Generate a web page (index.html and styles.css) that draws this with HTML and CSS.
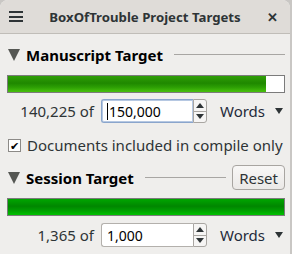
FILE: index.html
```html
<!DOCTYPE html>
<html lang="en">
<head>
    <meta charset="UTF-8">
    <title>BoxOfTrouble Project Targets</title>
    <link rel="stylesheet" href="styles.css">
</head>
<body>
    <div class="window">
        <div class="titlebar">
            <div class="menu-btn">
                <span></span><span></span><span></span>
            </div>
            <div class="title">BoxOfTrouble Project Targets</div>
            <div class="close-btn">&#x2715;</div>
        </div>
        <div class="content">
            <div class="section-head">
                <span class="caret"></span>
                <span class="section-title">Manuscript Target</span>
                <span class="rule"></span>
            </div>
            <div class="bar"><div class="fill manuscript" style="width: 93.5%"></div></div>
            <div class="count-row">
                <span class="count">140,225 of</span>
                <div class="spinbox focused">
                    <div class="spin-field"><span class="cursor"></span>150,000</div>
                    <div class="spin-btns">
                        <span class="up"></span>
                        <span class="down"></span>
                    </div>
                </div>
                <span class="unit">Words</span>
                <span class="unit-caret"></span>
            </div>
            <label class="check-row">
                <span class="checkbox">&#x2714;</span>
                <span>Documents included in compile only</span>
            </label>
            <div class="section-head session">
                <span class="caret"></span>
                <span class="section-title">Session Target</span>
                <span class="rule"></span>
                <button class="reset">Reset</button>
            </div>
            <div class="bar"><div class="fill session-fill" style="width: 100%"></div></div>
            <div class="count-row last">
                <span class="count">1,365 of</span>
                <div class="spinbox">
                    <div class="spin-field">1,000</div>
                    <div class="spin-btns">
                        <span class="up"></span>
                        <span class="down"></span>
                    </div>
                </div>
                <span class="unit">Words</span>
                <span class="unit-caret"></span>
            </div>
        </div>
    </div>
</body>
</html>
```

FILE: styles.css
```css
body {
    margin: 0;
    width: 292px;
    height: 254px;
    overflow: hidden;
    background-color: #c9c7c4;
    font-family: "Noto Sans", "Open Sans", sans-serif;
    font-size: 15px;
    color: #2e3436;
}

.window {
    width: 290px;
    height: 254px;
    background-color: #efeeec;
    border-radius: 8px 8px 0 0;
    overflow: hidden;
}

.titlebar {
    display: flex;
    align-items: center;
    height: 33px;
    background-color: #dfdcd8;
    border-bottom: 1px solid #c0bdb8;
    padding: 0 9px;
}

.menu-btn {
    display: flex;
    flex-direction: column;
    justify-content: space-between;
    width: 14px;
    height: 11px;
}
.menu-btn span {
    display: block;
    height: 2px;
    background-color: #2e3436;
}

.title {
    flex: 1;
    text-align: center;
    font-weight: bold;
    font-size: 13.2px;
    color: #2e3436;
}

.close-btn {
    font-size: 13px;
    font-weight: bold;
    margin-right: 3px;
}

.content {
    padding: 0 5px 0 7px;
}

.section-head {
    display: flex;
    align-items: center;
    height: 41px;
}

.caret {
    width: 0;
    height: 0;
    margin: 0 6px 0 1px;
    border-left: 6.5px solid transparent;
    border-right: 6.5px solid transparent;
    border-top: 12px solid #555753;
}

.section-title {
    font-weight: bold;
    color: #000;
}

.rule {
    flex: 1;
    height: 1px;
    margin: 0 0 0 11px;
    background-color: #a8a6a3;
}

.bar {
    height: 16px;
    border: 1px solid #7b7b7b;
    background-color: #fff;
}

.fill {
    height: 100%;
}
.fill.manuscript {
    background: linear-gradient(#2f9e06, #1f8800 45%, #2c9e04 70%, #48c20c);
}
.fill.session-fill {
    background: linear-gradient(#00a600, #008600 45%, #009c00 70%, #00c200);
}

.count-row {
    display: flex;
    align-items: center;
    height: 36px;
}
.count-row.last {
    height: 38px;
}

.count {
    width: 87px;
    text-align: right;
    margin-right: 7px;
}

.spinbox {
    display: flex;
    height: 24px;
}

.spin-field {
    display: flex;
    align-items: center;
    width: 86px;
    padding-left: 5px;
    background-color: #fff;
    border: 1px solid #b3b0ac;
    border-right: 0;
    border-radius: 3px 0 0 3px;
    font-size: 14px;
    color: #000;
}
.spinbox.focused .spin-field {
    border-color: #8aa5cc;
    box-shadow: inset 0 0 0 1px #b6c8e2;
}

.cursor {
    width: 1px;
    height: 17px;
    margin-right: 1px;
    background-color: #000;
}

.spin-btns {
    display: flex;
    flex-direction: column;
    width: 12px;
    border: 1px solid #a9a6a2;
    border-radius: 0 3px 3px 0;
    background-color: #f6f5f4;
}
.spin-btns span {
    flex: 1;
    display: flex;
    align-items: center;
    justify-content: center;
}
.spin-btns .up {
    border-bottom: 1px solid #a9a6a2;
}
.spin-btns .up::after {
    content: "";
    border-left: 4px solid transparent;
    border-right: 4px solid transparent;
    border-bottom: 5px solid #2e3436;
}
.spin-btns .down::after {
    content: "";
    border-left: 4px solid transparent;
    border-right: 4px solid transparent;
    border-top: 5px solid #2e3436;
}

.unit {
    margin-left: 13px;
    color: #1f2a3a;
}

.unit-caret {
    margin-left: 10px;
    border-left: 4.5px solid transparent;
    border-right: 4.5px solid transparent;
    border-top: 6px solid #2e3436;
}

.check-row {
    display: flex;
    align-items: center;
    height: 32px;
    padding-left: 1px;
}

.checkbox {
    display: flex;
    align-items: center;
    justify-content: center;
    width: 11px;
    height: 11px;
    margin-right: 6px;
    border: 1px solid #8c8a87;
    background-color: #fff;
    font-size: 11px;
    line-height: 1;
    color: #000;
}

.reset {
    margin-left: 6px;
    height: 25px;
    padding: 0 6px;
    font-family: "Noto Sans", "Open Sans", sans-serif;
    font-size: 15px;
    color: #2e3436;
    background: linear-gradient(#f8f7f6, #ebe9e7);
    border: 1px solid #a8a5a1;
    border-radius: 4px;
}

.section-head.session {
    height: 33px;
    padding-bottom: 4px;
}
```
